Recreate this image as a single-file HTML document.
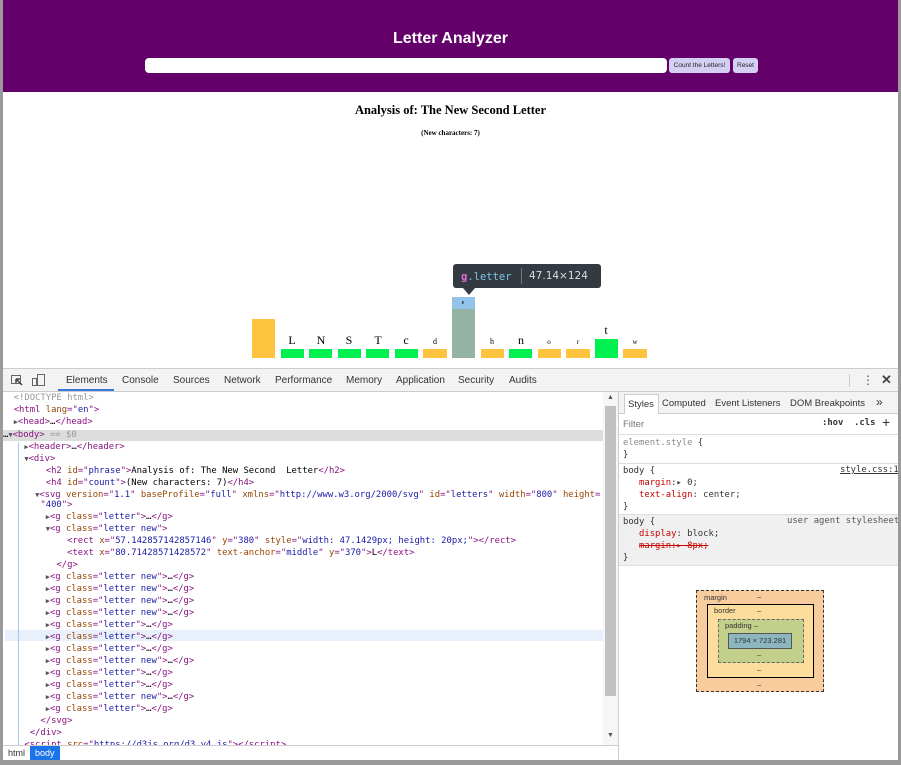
<!DOCTYPE html>
<html><head><style>
*{box-sizing:border-box;margin:0;padding:0}
body{width:901px;height:765px;background:#fff;position:relative;overflow:hidden;font-family:"Liberation Sans",sans-serif}
.abs{position:absolute}
.mono{font-family:"DejaVu Sans Mono","Liberation Mono",monospace;font-size:8.9px;white-space:pre}
.tag{color:#881280}.an{color:#994500}.av{color:#1a1aa6}.cm{color:#999}
.ln{position:absolute;left:0;height:12px;line-height:12px}
.tr{color:#555;font-size:7px}
</style></head><body>
<div class="abs" style="left:0;top:0;width:3px;height:765px;background:#9a9a9a"></div>
<div class="abs" style="left:898px;top:0;width:3px;height:765px;background:#9a9a9a"></div>
<div class="abs" style="left:3px;top:0;width:895px;height:92px;background:#640069"></div>
<div class="abs" style="left:3px;top:30px;width:895px;text-align:center;color:#fff;font-weight:bold;font-size:16px">Letter Analyzer</div>
<div class="abs" style="left:145px;top:58px;width:522px;height:15px;background:#fff;border-radius:4px"></div>
<div class="abs" style="left:669px;top:58px;width:61px;height:15px;background:#d4d0f4;border-radius:3px;font-size:6.5px;line-height:15px;text-align:center;color:#222">Count the Letters!</div>
<div class="abs" style="left:733px;top:58px;width:25px;height:15px;background:#d4d0f4;border-radius:3px;font-size:6.5px;line-height:15px;text-align:center;color:#222">Reset</div>
<div class="abs" style="left:3px;top:103px;width:895px;text-align:center;font-family:'Liberation Serif',serif;font-weight:bold;font-size:12.5px">Analysis of: The New Second Letter</div>
<div class="abs" style="left:3px;top:129px;width:895px;text-align:center;font-family:'Liberation Serif',serif;font-weight:bold;font-size:7px">(New characters: 7)</div>
<svg class="abs" style="left:0;top:0" width="901" height="368" font-family="Liberation Serif,serif" text-anchor="middle">
<rect x="252" y="319" width="23" height="39" fill="#ffc43f"/>
<rect x="281" y="349" width="23" height="9" fill="#00f050"/><text x="292" y="344" font-size="12">L</text>
<rect x="309" y="349" width="23" height="9" fill="#00f050"/><text x="321" y="344" font-size="12">N</text>
<rect x="338" y="349" width="23" height="9" fill="#00f050"/><text x="349" y="344" font-size="12">S</text>
<rect x="366" y="349" width="23" height="9" fill="#00f050"/><text x="378" y="344" font-size="12">T</text>
<rect x="395" y="349" width="23" height="9" fill="#00f050"/><text x="406" y="344" font-size="12">c</text>
<rect x="423" y="349" width="24" height="9" fill="#ffc43f"/><text x="435" y="344" font-size="8">d</text>
<rect x="452" y="297" width="23" height="12" fill="#92c3e8"/><rect x="452" y="309" width="23" height="49" fill="#94b3a4"/><text x="463" y="304" font-size="6">e</text>
<rect x="481" y="349" width="23" height="9" fill="#ffc43f"/><text x="492" y="344" font-size="8">h</text>
<rect x="509" y="349" width="23" height="9" fill="#00f050"/><text x="521" y="344" font-size="12">n</text>
<rect x="538" y="349" width="23" height="9" fill="#ffc43f"/><text x="549" y="344" font-size="7">o</text>
<rect x="566" y="349" width="24" height="9" fill="#ffc43f"/><text x="578" y="344" font-size="7">r</text>
<rect x="595" y="339" width="23" height="19" fill="#00f050"/><text x="606" y="334" font-size="12">t</text>
<rect x="623" y="349" width="24" height="9" fill="#ffc43f"/><text x="635" y="344" font-size="7">w</text>
<rect x="453" y="264" width="148" height="24" rx="3" fill="#333a42"/><path d="M463 288 L469 295 L475 288Z" fill="#333a42"/>
<text x="461" y="280" text-anchor="start" font-family="DejaVu Sans Mono,monospace" font-size="10.5"><tspan fill="#e86ed8" font-weight="bold">g</tspan><tspan fill="#7fc4e8">.letter</tspan></text>
<rect x="521" y="268" width="1" height="16" fill="#777"/>
<text x="529" y="279" text-anchor="start" font-family="DejaVu Sans,sans-serif" font-size="10.5" fill="#ddd">47.14×124</text>
</svg>
<!-- devtools -->
<div class="abs" style="left:3px;top:368px;width:895px;height:24px;background:#f3f3f3;border-top:1px solid #ccc;border-bottom:1px solid #ccc;font-size:10px;color:#333"></div>
<svg class="abs" style="left:10px;top:373px" width="36" height="14"><rect x="1.5" y="2.5" width="9" height="8" fill="none" stroke="#666"/><path d="M6 6 L12 12 M6 6 L6 10 M6 6 L10 6" stroke="#444" stroke-width="1.5"/><rect x="27.5" y="1.5" width="7" height="11" fill="none" stroke="#666"/><rect x="22.5" y="5.5" width="4" height="7" fill="#f3f3f3" stroke="#666"/></svg>
<div class="abs" style="top:375px;left:66px;font-size:10px;color:#333">Elements</div>
<div class="abs" style="left:58px;top:389px;width:56px;height:2px;background:#3879d9"></div>
<div class="abs" style="top:375px;left:122px;font-size:10px;color:#333">Console</div>
<div class="abs" style="top:375px;left:173px;font-size:10px;color:#333">Sources</div>
<div class="abs" style="top:375px;left:224px;font-size:10px;color:#333">Network</div>
<div class="abs" style="top:375px;left:275px;font-size:10px;color:#333">Performance</div>
<div class="abs" style="top:375px;left:346px;font-size:10px;color:#333">Memory</div>
<div class="abs" style="top:375px;left:396px;font-size:10px;color:#333">Application</div>
<div class="abs" style="top:375px;left:458px;font-size:10px;color:#333">Security</div>
<div class="abs" style="top:375px;left:509px;font-size:10px;color:#333">Audits</div>
<div class="abs" style="left:849px;top:374px;width:1px;height:13px;background:#ccc"></div>
<div class="abs" style="top:373px;left:862px;font-size:12px;color:#555">⋮</div>
<div class="abs" style="top:372px;left:881px;font-size:13px;color:#444;font-weight:bold">✕</div>
<!-- elements -->
<div class="abs" style="left:3px;top:392px;width:615px;height:353px;background:#fff;overflow:hidden">
<div class="abs" style="left:0;top:38px;width:600px;height:11px;background:#ddd"></div>
<div class="abs" style="left:2px;top:238px;width:598px;height:11px;background:#e8f0fb"></div>
<div class="abs" style="left:15px;top:50px;width:1px;height:310px;background:#a8c8ec"></div>
<div class="abs" style="left:600px;top:0;width:15px;height:353px;background:#f6f6f6"></div>
<div class="abs" style="left:602px;top:14px;width:11px;height:290px;background:#c1c1c1"></div>
<div class="abs tr" style="left:604px;top:2px">▲</div><div class="abs tr" style="left:604px;top:340px">▼</div>
<div class="mono abs" style="left:0;top:0">
<div class="ln" style="top:0"><span class="cm">  &lt;!DOCTYPE html&gt;</span></div>
<div class="ln" style="top:12px">  <span class="tag">&lt;html</span> <span class="an">lang</span><span class="tag">="</span><span class="av">en</span><span class="tag">"&gt;</span></div>
<div class="ln" style="top:24px">  <span class="tr">▶</span><span class="tag">&lt;head&gt;</span>…<span class="tag">&lt;/head&gt;</span></div>
<div class="ln" style="top:37px">…<span class="tr">▼</span><span class="tag">&lt;body&gt;</span> <span class="cm">== $0</span></div>
<div class="ln" style="top:49px">    <span class="tr">▶</span><span class="tag">&lt;header&gt;</span>…<span class="tag">&lt;/header&gt;</span></div>
<div class="ln" style="top:61px">    <span class="tr">▼</span><span class="tag">&lt;div&gt;</span></div>
<div class="ln" style="top:73px">        <span class="tag">&lt;h2</span> <span class="an">id</span><span class="tag">="</span><span class="av">phrase</span><span class="tag">"&gt;</span>Analysis of: The New Second  Letter<span class="tag">&lt;/h2&gt;</span></div>
<div class="ln" style="top:85px">        <span class="tag">&lt;h4</span> <span class="an">id</span><span class="tag">="</span><span class="av">count</span><span class="tag">"&gt;</span>(New characters: 7)<span class="tag">&lt;/h4&gt;</span></div>
<div class="ln" style="top:97px">      <span class="tr">▼</span><span class="tag">&lt;svg</span> <span class="an">version</span><span class="tag">="</span><span class="av">1.1</span><span class="tag">"</span> <span class="an">baseProfile</span><span class="tag">="</span><span class="av">full</span><span class="tag">"</span> <span class="an">xmlns</span><span class="tag">="</span><span class="av">http://www.w3.org/2000/svg</span><span class="tag">"</span> <span class="an">id</span><span class="tag">="</span><span class="av">letters</span><span class="tag">"</span> <span class="an">width</span><span class="tag">="</span><span class="av">800</span><span class="tag">"</span> <span class="an">height</span><span class="tag">=</span></div>
<div class="ln" style="top:107px">       <span class="tag">"</span><span class="av">400</span><span class="tag">"&gt;</span></div>
<div class="ln" style="top:119px">        <span class="tr">▶</span><span class="tag">&lt;g</span> <span class="an">class</span><span class="tag">="</span><span class="av">letter</span><span class="tag">"&gt;</span>…<span class="tag">&lt;/g&gt;</span></div>
<div class="ln" style="top:131px">        <span class="tr">▼</span><span class="tag">&lt;g</span> <span class="an">class</span><span class="tag">="</span><span class="av">letter new</span><span class="tag">"&gt;</span></div>
<div class="ln" style="top:143px">            <span class="tag">&lt;rect</span> <span class="an">x</span><span class="tag">="</span><span class="av">57.142857142857146</span><span class="tag">"</span> <span class="an">y</span><span class="tag">="</span><span class="av">380</span><span class="tag">"</span> <span class="an">style</span><span class="tag">="</span><span class="av">width: 47.1429px; height: 20px;</span><span class="tag">"&gt;&lt;/rect&gt;</span></div>
<div class="ln" style="top:155px">            <span class="tag">&lt;text</span> <span class="an">x</span><span class="tag">="</span><span class="av">80.71428571428572</span><span class="tag">"</span> <span class="an">text-anchor</span><span class="tag">="</span><span class="av">middle</span><span class="tag">"</span> <span class="an">y</span><span class="tag">="</span><span class="av">370</span><span class="tag">"&gt;</span>L<span class="tag">&lt;/text&gt;</span></div>
<div class="ln" style="top:167px">          <span class="tag">&lt;/g&gt;</span></div>
<div class="ln" style="top:179px">        <span class="tr">▶</span><span class="tag">&lt;g</span> <span class="an">class</span><span class="tag">="</span><span class="av">letter new</span><span class="tag">"&gt;</span>…<span class="tag">&lt;/g&gt;</span></div>
<div class="ln" style="top:191px">        <span class="tr">▶</span><span class="tag">&lt;g</span> <span class="an">class</span><span class="tag">="</span><span class="av">letter new</span><span class="tag">"&gt;</span>…<span class="tag">&lt;/g&gt;</span></div>
<div class="ln" style="top:203px">        <span class="tr">▶</span><span class="tag">&lt;g</span> <span class="an">class</span><span class="tag">="</span><span class="av">letter new</span><span class="tag">"&gt;</span>…<span class="tag">&lt;/g&gt;</span></div>
<div class="ln" style="top:215px">        <span class="tr">▶</span><span class="tag">&lt;g</span> <span class="an">class</span><span class="tag">="</span><span class="av">letter new</span><span class="tag">"&gt;</span>…<span class="tag">&lt;/g&gt;</span></div>
<div class="ln" style="top:227px">        <span class="tr">▶</span><span class="tag">&lt;g</span> <span class="an">class</span><span class="tag">="</span><span class="av">letter</span><span class="tag">"&gt;</span>…<span class="tag">&lt;/g&gt;</span></div>
<div class="ln" style="top:239px">        <span class="tr">▶</span><span class="tag">&lt;g</span> <span class="an">class</span><span class="tag">="</span><span class="av">letter</span><span class="tag">"&gt;</span>…<span class="tag">&lt;/g&gt;</span></div>
<div class="ln" style="top:251px">        <span class="tr">▶</span><span class="tag">&lt;g</span> <span class="an">class</span><span class="tag">="</span><span class="av">letter</span><span class="tag">"&gt;</span>…<span class="tag">&lt;/g&gt;</span></div>
<div class="ln" style="top:263px">        <span class="tr">▶</span><span class="tag">&lt;g</span> <span class="an">class</span><span class="tag">="</span><span class="av">letter new</span><span class="tag">"&gt;</span>…<span class="tag">&lt;/g&gt;</span></div>
<div class="ln" style="top:275px">        <span class="tr">▶</span><span class="tag">&lt;g</span> <span class="an">class</span><span class="tag">="</span><span class="av">letter</span><span class="tag">"&gt;</span>…<span class="tag">&lt;/g&gt;</span></div>
<div class="ln" style="top:287px">        <span class="tr">▶</span><span class="tag">&lt;g</span> <span class="an">class</span><span class="tag">="</span><span class="av">letter</span><span class="tag">"&gt;</span>…<span class="tag">&lt;/g&gt;</span></div>
<div class="ln" style="top:299px">        <span class="tr">▶</span><span class="tag">&lt;g</span> <span class="an">class</span><span class="tag">="</span><span class="av">letter new</span><span class="tag">"&gt;</span>…<span class="tag">&lt;/g&gt;</span></div>
<div class="ln" style="top:311px">        <span class="tr">▶</span><span class="tag">&lt;g</span> <span class="an">class</span><span class="tag">="</span><span class="av">letter</span><span class="tag">"&gt;</span>…<span class="tag">&lt;/g&gt;</span></div>
<div class="ln" style="top:323px">       <span class="tag">&lt;/svg&gt;</span></div>
<div class="ln" style="top:335px">     <span class="tag">&lt;/div&gt;</span></div>
<div class="ln" style="top:347px">    <span class="tag">&lt;script</span> <span class="an">src</span><span class="tag">="</span><span class="av">https://d3js.org/d3.v4.js</span><span class="tag">"&gt;&lt;/script&gt;</span></div>
</div>
</div>
<div class="abs" style="left:3px;top:745px;width:615px;height:15px;background:#fff;border-top:1px solid #ccc;font-size:9px;line-height:14px"><span style="padding:0 5px;color:#333">html</span><span style="background:#1a73e8;color:#fff;padding:0 5px;display:inline-block">body</span></div>
<div class="abs" style="left:3px;top:760px;width:895px;height:5px;background:#9a9a9a"></div>
<!-- styles -->
<div class="abs" style="left:618px;top:392px;width:280px;height:368px;background:#fff;border-left:1px solid #ccc;font-size:9.5px;color:#333;overflow:hidden">
<div class="abs" style="left:0;top:0;width:280px;height:22px;background:#f3f3f3;border-bottom:1px solid #ccc"></div>
<div class="abs" style="left:5px;top:2px;width:35px;height:20px;background:#fff;border:1px solid #ccc;border-bottom:none;padding:4px 3px">Styles</div>
<div class="abs" style="left:43px;top:6px">Computed</div>
<div class="abs" style="left:96px;top:6px">Event Listeners</div>
<div class="abs" style="left:171px;top:6px">DOM Breakpoints</div>
<div class="abs" style="left:257px;top:3px;font-size:12px">»</div>
<div class="abs" style="left:4px;top:27px;color:#777">Filter</div>
<div class="abs mono" style="left:203px;top:26px;font-weight:bold">:hov  .cls</div>
<div class="abs" style="left:263px;top:22px;font-size:14px">+</div>
<div class="abs" style="left:0;top:42px;width:280px;height:1px;background:#ddd"></div>
<div class="abs mono" style="left:4px;top:45px;line-height:12px;color:#333"><span style="color:#888">element.style</span> {
}</div>
<div class="abs" style="left:0;top:71px;width:280px;height:1px;background:#ddd"></div>
<div class="abs mono" style="left:4px;top:73px;line-height:12px">body {
   <span style="color:#c80000">margin</span>:▸ 0;
   <span style="color:#c80000">text-align</span>: center;
}</div>
<div class="abs mono" style="left:221px;top:73px;text-decoration:underline">style.css:1</div>
<div class="abs" style="left:0;top:122px;width:280px;height:52px;background:#f0f0f0;border-top:1px solid #ddd;border-bottom:1px solid #ddd"></div>
<div class="abs mono" style="left:4px;top:124px;line-height:12px">body {
   <span style="color:#c80000">display</span>: block;
   <span style="color:#c80000;text-decoration:line-through">margin:▸ 8px;</span>
}</div>
<div class="abs mono" style="left:168px;top:124px;color:#555">user agent stylesheet</div>
<div class="abs" style="left:77px;top:198px;width:128px;height:102px;background:#f9cc9d;border:1px dashed #333;font-size:7.5px">
 <div class="abs" style="left:7px;top:2px">margin</div><div class="abs" style="left:60px;top:1px">–</div>
 <div class="abs" style="left:10px;top:13px;width:107px;height:74px;background:#fddd9b;border:1px solid #000">
  <div class="abs" style="left:6px;top:1px">border</div><div class="abs" style="left:49px;top:1px">–</div>
  <div class="abs" style="left:10px;top:14px;width:86px;height:44px;background:#c3d08b;border:1px dashed #666">
   <div class="abs" style="left:6px;top:1px">padding –</div>
   <div class="abs" style="left:9px;top:13px;width:64px;height:16px;background:#8cb6c0;border:1px solid #555;text-align:center;line-height:14px">1794 × 723.281</div>
   <div class="abs" style="left:38px;top:30px">–</div>
  </div>
  <div class="abs" style="left:49px;top:60px">–</div>
 </div>
 <div class="abs" style="left:60px;top:89px">–</div>
</div>
</div>
</body></html>
